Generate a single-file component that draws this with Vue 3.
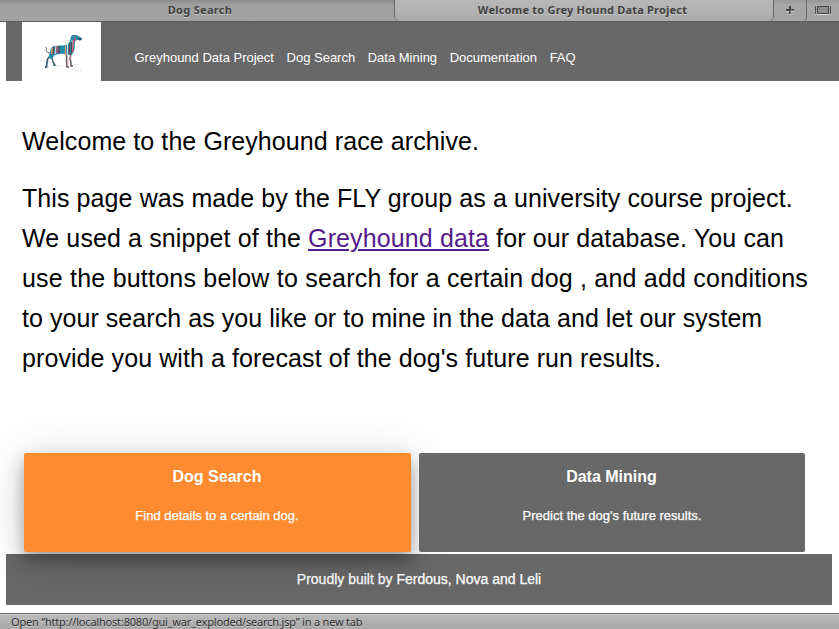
<script setup>
const links = ['Greyhound Data Project', 'Dog Search', 'Data Mining', 'Documentation', 'FAQ']
</script>

<template>
  <div class="window">
    <div class="tabs">
      <div class="tab inactive">Dog Search</div>
      <div class="tab active">Welcome to Grey Hound Data Project</div>
      <div class="tool plus">
        <svg width="10" height="10" viewBox="0 0 10 10" shape-rendering="crispEdges"><path d="M1 6h8v1H1zM4 9h2v1H4z" fill="#ccc" /><path d="M4 1h2v3h3v2H6v3H4V6H1V4h3z" fill="#454545" /><path d="M4 5h4v1H6v2H5V5z" fill="#777" /></svg>
      </div>
      <div class="tool overview">
        <svg width="16" height="10" viewBox="0 0 16 10" shape-rendering="crispEdges"><path d="M0 9.500h1M2 9.500h12M15 9.500h1" stroke="#ddd" /><path d="M0 1h1v8H0zM15 1h1v8h-1z" fill="#505050" /><rect x="2.500" y="1.500" width="11" height="7" fill="#8d8d8d" stroke="#484848" /></svg>
      </div>
    </div>

    <header class="header">
      <div class="logo">
        <svg width="44" height="40" viewBox="0 0 44 40">
          <path d="M0 29l14 2M14 34h8M28 36l14 3M33 33l6-1" stroke="#dbe3e5" stroke-width=".8" fill="none" />
          <path d="M11 20.500c-3 1-5.500-1-4.500-3 .5-1.500 0-2-1-2" stroke="#5d6b72" stroke-width="1" fill="none" />
          <path d="M11 20l-1 4-2.500 3L6.500 35H5" stroke="#466575" stroke-width="1.800" fill="none" />
          <path d="M14 21l-2 5 1 4 2 3h-2" stroke="#405966" stroke-width="1.400" fill="none" />
          <path d="M10 21q0-5 3-6.500 4-1.500 9-1 5 0 7-2.500l1.500-4q0-4 3-4h3l4.500 2.500q1.500 1 0 2l-4 .5-2 1-.5 8q-1 5-4 6.500l-3-1q-4-1-8-.5l-5 1-3 4-3-1z" fill="#238da8" />
          <path d="M27 22q-1 4 0 13h2M31 21l-1 6 1 4v3h2" stroke="#625661" stroke-width="1.500" fill="none" />
          <path d="M14 14.500l-1 8M19 14v7M30 11l-1 11" stroke="#713c48" stroke-width="1.300" />
          <path d="M12.500 16l-1 6M25.500 14v9" stroke="#e6a168" stroke-width="1.200" />
          <path d="M16 14l-1 8M27.500 12v12M32 8v12" stroke="#fff" stroke-width=".8" />
          <path d="M17 14v7M33.500 8l-1 12M35 4.500V9" stroke="#e14c65" stroke-width="1.200" />
          <path d="M31.500 10v11" stroke="#3b3040" stroke-width=".8" />
          <path d="M28 25v8M31 23v5" stroke="#e8a3ae" stroke-width=".7" />
          <path d="M38 6h3l1 2-3 .5z" fill="#194f68" />
        </svg>
      </div>
      <nav class="nav"><a v-for="link in links" :key="link">{{ link }}</a></nav>
    </header>

    <main class="content">
      <p class="copy"><span class="line l0">Welcome to the Greyhound race archive.</span></p>
      <p class="copy">
        <span class="line l1">This page was made by the FLY group as a university course project.</span>
        <span class="line l2">We used a snippet of the <a class="link">Greyhound data</a> for our database. You can</span>
        <span class="line l3">use the buttons below to search for a certain dog , and add conditions</span>
        <span class="line l4">to your search as you like or to mine in the data and let our system</span>
        <span class="line l5">provide you with a forecast of the dog's future run results.</span>
      </p>
    </main>

    <section class="actions">
      <a class="card search"><h3>Dog Search</h3><p>Find details to a certain dog.</p></a>
      <a class="card mining"><h3>Data Mining</h3><p>Predict the dog's future results.</p></a>
    </section>
    <footer class="footer"><span>Proudly built by Ferdous, Nova and Leli</span></footer>
    <div class="status"><span>Open “http://localhost:8080/gui_war_exploded/search.jsp” in a new tab</span></div>
  </div>
</template>

<style>
body { margin: 0; background: #fff; overflow: hidden; }
</style>

<style scoped>
* { box-sizing: border-box; }
.window { width: 839px; height: 629px; display: flex; flex-direction: column; overflow: hidden; background: #fff; font-family: "Liberation Sans", sans-serif; }
.tabs { height: 22px; flex: none; display: flex; background: #a0a0a0; border-bottom: 1px solid #5c5c5c; font: bold 11px/20px "Noto Sans", sans-serif; color: #414141; text-shadow: 0 1px 0 #c6c6c6; }
.tab { text-align: center; white-space: nowrap; }
.inactive { width: 394px; padding-left: 6px; letter-spacing: .3px; background: linear-gradient(#8c8c8c, #a0a0a0 5px, #a3a3a3); }
.active { width: 380px; padding-right: 3px; letter-spacing: .2px; background: linear-gradient(#b8b8b8, #acacac); border: solid #686868; border-width: 0 1px; border-radius: 0 0 5px 5px; }
.tool { display: flex; align-items: center; justify-content: center; background: linear-gradient(#989898, #a7a7a7 5px, #a5a5a5); }
.tool svg { margin-top: -1px; }
.plus { width: 33px; border-right: 1px solid #696969; border-radius: 0 0 4px 0; }
.overview { width: 32px; }
.header { height: 59px; flex: none; margin-left: 6px; padding-left: 16px; display: flex; background: #686868; }
.logo { width: 79px; background: #fff; padding: 10px 0 0 18px; }
.nav { display: flex; gap: 12.55px; padding: 27px 0 0 33.5px; font-size: 13px; line-height: 18px; color: #fff; white-space: nowrap; }
.content { padding: 40px 0 0 22px; height: 372px; flex: none; font-size: 25px; line-height: 40px; color: #000; }
.copy { margin: 0 0 17px; }
.line { display: block; white-space: nowrap; }
.l0 { letter-spacing: .08px; }
.l1 { letter-spacing: .09px; }
.l2 { letter-spacing: .12px; }
.l3 { letter-spacing: .21px; }
.l4 { letter-spacing: .055px; }
.l5 { letter-spacing: .085px; }
.link { color: #551a8b; text-decoration: underline; text-decoration-thickness: 1.5px; text-underline-offset: 2px; }
.actions { display: grid; grid-template-columns: 387px 386px; gap: 8px; padding-left: 24px; height: 101px; flex: none; }
.card { position: relative; height: 99px; border-radius: 2px; background: #686868; color: #fff; text-align: center; }
.card h3 { margin: 14px 1px 0 0; font-size: 16px; line-height: 20px; }
.card p { margin: 19px 1px 0 0; font-size: 13px; line-height: 20px; -webkit-text-stroke: .25px #fff; }
.search { z-index: 1; background: #ff8b30; box-shadow: 0 8px 16px rgba(0,0,0,.3), 0 6px 44px rgba(0,0,0,.19); }
.mining { z-index: 2; }
.mining p { margin-right: 0; }
.footer { height: 51px; flex: none; margin: 0 7px 8px 6px; background: #686868; color: #fff; text-align: center; font-size: 14px; line-height: 50px; -webkit-text-stroke: .25px #fff; }
.status { position: relative; z-index: 2; height: 16px; flex: none; border-top: 1px solid #666b66; box-shadow: inset 0 1px #ccc; background: linear-gradient(#bcbcbc, #a8a8a8); padding-left: 11px; font: 11px/15px "Noto Sans", sans-serif; letter-spacing: -.2px; color: #303030; text-shadow: 0 1px #ccc; white-space: nowrap; }
</style>
